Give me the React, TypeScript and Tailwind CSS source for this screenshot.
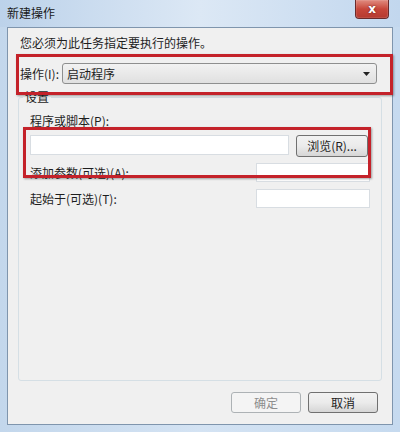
import React from "react";

const font = { fontFamily: '"Noto Sans CJK SC", "Microsoft YaHei", sans-serif' };

export default function App() {
  return (
    <div
      className="relative w-[400px] h-[432px] flex flex-col overflow-hidden bg-gradient-to-r from-[#c3d7ec] via-[#d4e3f3] to-[#c6daef] text-[12px] leading-[16px] text-[#1e1e1e]"
      style={font}
    >
      {/* title bar */}
      <div className="h-[27px] flex items-start justify-between shrink-0 bg-gradient-to-r from-[#bcd2ea] via-[#dce8f5] to-[#c2d7ee]">
        <div className="pl-[7px] pt-[5px] text-[#1a1a1a]">新建操作</div>
        <div className="mr-[11px] w-[34px] h-[19px] rounded-b-[4px] border border-t-0 border-[#6b2a2a] bg-gradient-to-b from-[#e08b80] via-[#c7463a] to-[#b53a30] flex items-center justify-center shadow-[inset_0_0_1px_#ffffff]">
          <span className="text-white text-[12px] font-bold leading-none" style={{ fontFamily: '"DejaVu Sans", sans-serif', textShadow: "0 0 2px #5a1a1a" }}>x</span>
        </div>
      </div>

      {/* client area */}
      <div className="flex-1 mx-[7px] mb-[7px] border border-[#7f95ad] bg-[#f0f0f0] flex flex-col">
        <div className="pl-[12px] pt-[7px]">您必须为此任务指定要执行的操作。</div>

        <div className="flex items-center mt-[12px] pl-[12px]">
          <span className="w-[42px]">操作(I):</span>
          <div className="w-[315px] h-[21px] rounded-[3px] border border-[#8e8f8f] bg-gradient-to-b from-[#f2f2f2] to-[#e0e0e0] flex items-center justify-between pl-[4px] pr-[6px]">
            <span>启动程序</span>
            <svg width="7" height="4" viewBox="0 0 7 4"><path d="M0 0 H7 L3.5 4 Z" fill="#222" /></svg>
          </div>
        </div>

        <fieldset className="flex-1 mx-[10px] mt-[5px] border border-[#d5dfe5] rounded-[3px] px-[11px] flex flex-col">
          <legend className="-ml-[7px] px-[2px]">设置</legend>
          <div className="mt-[8px]">程序或脚本(P):</div>
          <div className="flex items-start mt-[6px]">
            <div className="w-[259px] h-[20px] border border-[#d8dde2] bg-white" />
            <div className="ml-[7px] w-[72px] h-[22px] rounded-[3px] border border-[#707070] bg-gradient-to-b from-[#f2f2f2] via-[#ebebeb] to-[#d6d6d6] flex items-center justify-center">
              浏览(R)...
            </div>
          </div>
          <div className="flex items-center justify-between mt-[6px]">
            <span>添加参数(可选)(A):</span>
            <div className="w-[114px] h-[19px] border border-[#d8dde2] bg-white" />
          </div>
          <div className="flex items-center justify-between mt-[7px]">
            <span>起始于(可选)(T):</span>
            <div className="w-[114px] h-[19px] border border-[#d8dde2] bg-white" />
          </div>
        </fieldset>

        <div className="flex justify-end gap-[7px] mt-[11px] mb-[11px] mr-[14px]">
          <div className="w-[70px] h-[21px] rounded-[3px] border border-[#adb2b5] bg-[#f4f4f4] text-[#8d8d8d] flex items-center justify-center">确定</div>
          <div className="w-[70px] h-[21px] rounded-[3px] border border-[#707070] bg-gradient-to-b from-[#f2f2f2] via-[#ebebeb] to-[#d6d6d6] flex items-center justify-center">取消</div>
        </div>
      </div>

      {/* red annotation boxes */}
      <div className="absolute left-[16px] top-[54px] w-[377px] h-[41px] border-[3px] border-[#c4222a] shadow-[1px_1px_2px_rgba(0,0,0,0.35)]" />
      <div className="absolute left-[23px] top-[127px] w-[348px] h-[51px] border-[3px] border-[#c4222a] shadow-[1px_1px_2px_rgba(0,0,0,0.35)]" />
    </div>
  );
}
